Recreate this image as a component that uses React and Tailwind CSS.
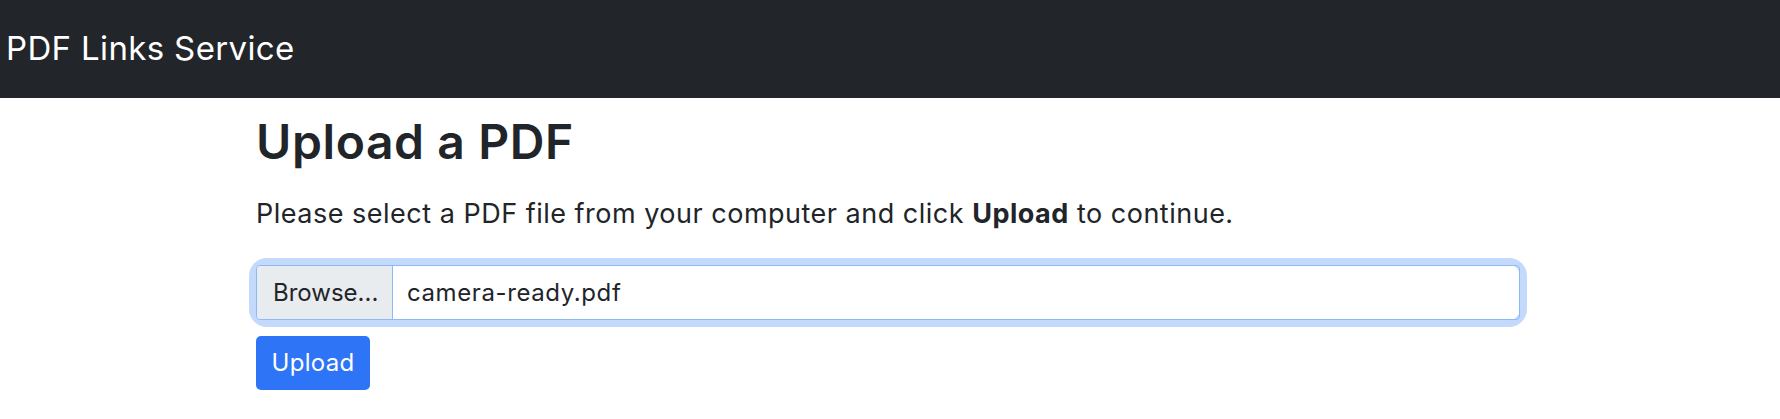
export default function App() {
  return (
    <div className="min-h-[419px] bg-white text-[#212529]" style={{ fontFamily: 'Inter, "Noto Sans", sans-serif' }}>
      <nav className="h-[98px] bg-[#222529] flex items-center pl-[6px]">
        <span className="text-white text-[33px] leading-none tracking-[0.35px] pb-[2px]">PDF Links Service</span>
      </nav>
      <div className="ml-[256px] w-[1264px]">
        <h1 className="mt-[17px] text-[48px] leading-[54px] font-semibold tracking-[0.6px]">Upload a PDF</h1>
        <p className="mt-[25px] text-[27px] leading-[39px] tracking-[0.5px]">
          Please select a PDF file from your computer and click <strong className="font-bold">Upload</strong> to continue.
        </p>
        <div className="mt-[32px] rounded-[11px] shadow-[0_0_0_7px_#c4dafd]">
          <div className="flex h-[55px] border border-[#8db9fb] rounded-[4px] overflow-hidden text-[24px]">
            <div className="w-[136px] shrink-0 bg-[#e9ecef] border-r border-[#8db9fb] flex items-center pl-[16px]">
              Browse...
            </div>
            <div className="flex-1 flex items-center pl-[14px] tracking-[0.6px]">camera-ready.pdf</div>
          </div>
        </div>
        <button className="mt-[16px] h-[54px] w-[114px] rounded-[5px] bg-[#2e74f6] text-white text-[24px] flex items-center justify-center tracking-[0.3px]">
          Upload
        </button>
      </div>
    </div>
  );
}
